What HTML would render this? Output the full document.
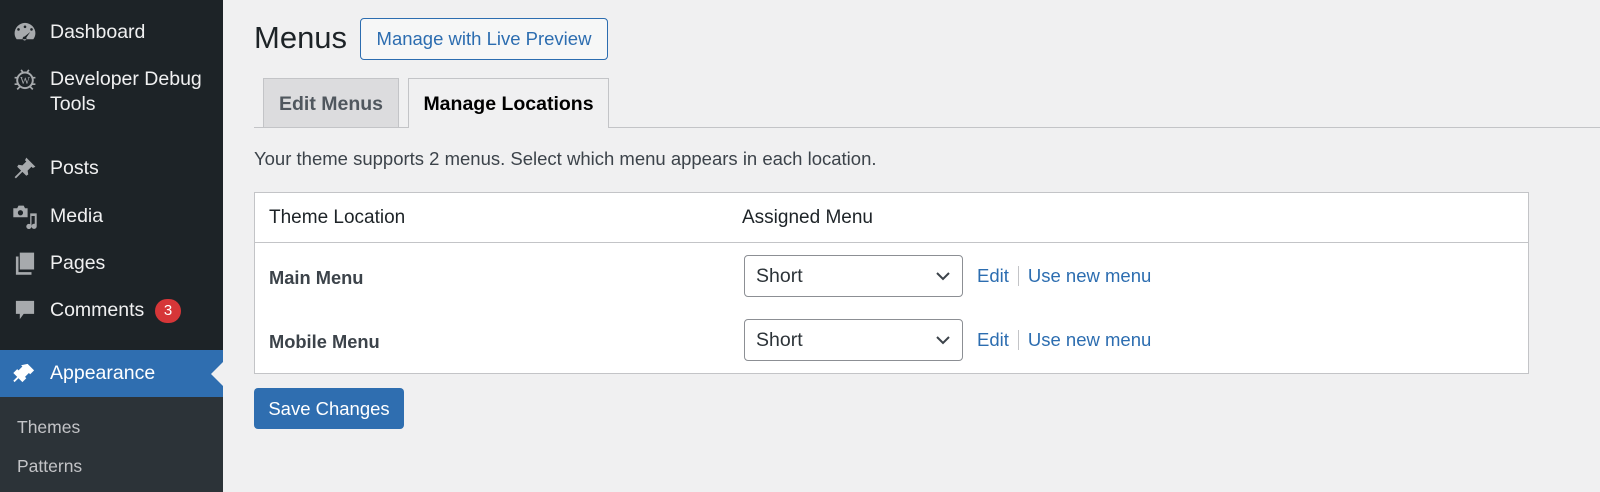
<!DOCTYPE html>
<html><head><meta charset="utf-8"><style>
*{box-sizing:border-box;margin:0;padding:0}
body{width:1600px;height:492px;overflow:hidden;background:#f0f0f1;font-family:"Liberation Sans",sans-serif;position:relative;color:#3c434a}
#side{position:absolute;left:0;top:0;width:223px;height:492px;background:#1d2327}
.it{position:absolute;left:50px;color:#f0f0f1;font-size:19.5px;line-height:25px}
.ic{position:absolute;left:12px;width:26px;height:26px}
#app{position:absolute;left:0;top:350px;width:223px;height:47px;background:#2f6eb0}
#sub{position:absolute;left:0;top:397px;width:223px;height:95px;background:#2c3338}
.si{position:absolute;left:17px;color:#c3c4c7;font-size:17.5px}
.abs{position:absolute}
a{color:#2c6db0;text-decoration:none}
</style></head><body>
<div id="side">
<svg class="ic" style="top:19px" viewBox="0 0 20 20"><path fill="#a7aaad" d="M10 3a8 8 0 0 0-8 8c0 2 .7 3.5 1.6 4.6h12.8A7.9 7.9 0 0 0 18 11a8 8 0 0 0-8-8zm0 2a1 1 0 1 1 0 2 1 1 0 0 1 0-2zM5 7a1 1 0 1 1 0 2 1 1 0 0 1 0-2zm10 0a1 1 0 1 1 0 2 1 1 0 0 1 0-2zm-1 3l-3 4.3a1.5 1.5 0 1 1-1.3-.8z"/></svg>
<div class="it" style="top:20px">Dashboard</div>
<svg class="ic" style="top:66px" viewBox="0 0 20 20"><circle cx="10" cy="11" r="6" fill="none" stroke="#a7aaad" stroke-width="1.5"/><path stroke="#a7aaad" stroke-width="1.3" d="M7 3l1.5 2M13 3l-1.5 2M2 9h3M15 9h3M2 14h3M15 14h3M4 18l2-2M16 18l-2-2"/><text x="10" y="14" font-size="8" text-anchor="middle" fill="#a7aaad" font-family="Liberation Serif">W</text></svg>
<div class="it" style="top:67px">Developer Debug<br>Tools</div>
<svg class="ic" style="top:155px" viewBox="0 0 20 20"><path fill="#a7aaad" d="M11 2l7 7-2 1-1-1-3 3 .5 3-1.5 1-3-3-5 5-1-1 5-5-3-3 1-1.5 3 .5 3-3-1-1z"/></svg>
<div class="it" style="top:156px">Posts</div>
<svg class="ic" style="top:203px" viewBox="0 0 20 20"><path fill="#a7aaad" d="M1 4h3l1-2h4l1 2h2v7H1zm5.5 1.5a2 2 0 1 0 0 4 2 2 0 0 0 0-4zM14 8h5v10a2 2 0 1 1-1.5-2V10H15v8a2 2 0 1 1-1-1.7z"/></svg>
<div class="it" style="top:204px">Media</div>
<svg class="ic" style="top:250px" viewBox="0 0 20 20"><path fill="#a7aaad" d="M6 2h11v13H6zM3 5h2v12h10v2H3z"/></svg>
<div class="it" style="top:251px">Pages</div>
<svg class="ic" style="top:297px" viewBox="0 0 20 20"><path fill="#a7aaad" d="M3 3h14v10H9l-3 4v-4H3z"/></svg>
<div class="it" style="top:298px">Comments</div>
<div class="abs" style="left:155px;top:299px;width:26px;height:24px;border-radius:12px;background:#d63638;color:#fff;font-size:15px;text-align:center;line-height:24px">3</div>
</div>
<div id="app"><svg class="ic" style="top:10px" viewBox="0 0 20 20"><path fill="#fff" d="M12 3l5 5-3 3-1-1-3 3 1 1-3 3-3-3-3 3-1-1 3-3-3-3 3-3 1 1 3-3-1-1z"/></svg><div class="it" style="top:11px;color:#fff">Appearance</div>
<div class="abs" style="left:211px;top:12px;width:0;height:0;border:12px solid transparent;border-right-color:#f0f0f1;border-left:0"></div></div>
<div id="sub"><div class="si" style="top:20px">Themes</div><div class="si" style="top:59px">Patterns</div></div>

<div class="abs" style="left:254px;top:20px;font-size:31px;color:#1d2327">Menus</div>
<div class="abs" style="left:360px;top:18px;width:248px;height:42px;border:1px solid #2c6db0;border-radius:4px;background:#f6f7f7;color:#2c6db0;font-size:18.5px;text-align:center;line-height:40px">Manage with Live Preview</div>
<div class="abs" style="left:263px;top:78px;width:136px;height:50px;background:#dcdcde;border:1px solid #c3c4c7;border-bottom:0;font-size:19.5px;font-weight:bold;color:#50575e;text-align:center;line-height:50px">Edit Menus</div>
<div class="abs" style="left:254px;top:127px;width:1346px;height:1px;background:#c3c4c7"></div>
<div class="abs" style="left:408px;top:78px;width:201px;height:50px;background:#f0f0f1;border:1px solid #c3c4c7;border-bottom:0;font-size:19.5px;font-weight:bold;color:#000;text-align:center;line-height:50px">Manage Locations</div>
<div class="abs" style="left:254px;top:148px;font-size:18.5px">Your theme supports 2 menus. Select which menu appears in each location.</div>
<div class="abs" style="left:254px;top:192px;width:1275px;height:182px;background:#fff;border:1px solid #c3c4c7">
<div class="abs" style="left:0;top:49px;width:1273px;height:1px;background:#c3c4c7"></div>
<div class="abs" style="left:14px;top:14px;font-size:19px;color:#1d2327">Theme Location</div>
<div class="abs" style="left:487px;top:14px;font-size:19px;color:#1d2327">Assigned Menu</div>
<div class="abs" style="left:14px;top:74px;font-size:18.3px;font-weight:bold;color:#3c434a">Main Menu</div>
<div class="abs" style="left:14px;top:138px;font-size:18.3px;font-weight:bold;color:#3c434a">Mobile Menu</div>
</div>
<div class="abs" style="left:744px;top:255px;width:219px;height:42px;border:1px solid #8c8f94;border-radius:4px;background:#fff;font-size:19.5px;color:#2c3338;padding-left:11px;line-height:40px">Short<svg class="abs" style="left:190px;top:14px" width="16" height="12" viewBox="0 0 16 12"><path d="M2 3l6 6 6-6" fill="none" stroke="#3c434a" stroke-width="2"/></svg></div>
<div class="abs" style="left:744px;top:319px;width:219px;height:42px;border:1px solid #8c8f94;border-radius:4px;background:#fff;font-size:19.5px;color:#2c3338;padding-left:11px;line-height:40px">Short<svg class="abs" style="left:190px;top:14px" width="16" height="12" viewBox="0 0 16 12"><path d="M2 3l6 6 6-6" fill="none" stroke="#3c434a" stroke-width="2"/></svg></div>
<div class="abs" style="left:977px;top:265px;font-size:18.5px"><a>Edit</a><span style="display:inline-block;width:1px;height:20px;background:#c3c4c7;margin:0 9px;vertical-align:-4px"></span><a>Use new menu</a></div>
<div class="abs" style="left:977px;top:329px;font-size:18.5px"><a>Edit</a><span style="display:inline-block;width:1px;height:20px;background:#c3c4c7;margin:0 9px;vertical-align:-4px"></span><a>Use new menu</a></div>
<div class="abs" style="left:254px;top:388px;width:150px;height:41px;background:#2f6eb0;border-radius:4px;color:#fff;font-size:18.5px;text-align:center;line-height:41px">Save Changes</div>
</body></html>
